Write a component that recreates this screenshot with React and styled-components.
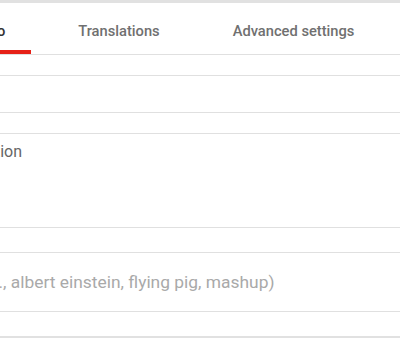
import React, { useState } from "react";
import styled, { createGlobalStyle } from "styled-components";

const GlobalStyle = createGlobalStyle`
  body {
    margin: 0;
    background: #fff;
    overflow: hidden;
    font-family: Roboto, "Liberation Sans", Arial, sans-serif;
  }
`;

const tabs = ["Basic info", "Translations", "Advanced settings"];

function App() {
  const [active, setActive] = useState("Basic info");

  return (
    <>
      <GlobalStyle />
      <Card>
        <TabBar>
          {tabs.map((tab) => (
            <Tab
              key={tab}
              $active={active === tab}
              onClick={() => setActive(tab)}
            >
              {tab}
            </Tab>
          ))}
        </TabBar>
        <Form>
          <Input type="text" placeholder="Title" />
          <TextArea placeholder="Description" />
          <Input
            $tall
            type="text"
            placeholder="Tags (e.g., albert einstein, flying pig, mashup)"
          />
        </Form>
      </Card>
    </>
  );
}

const Card = styled.div`
  height: 338px;
  box-sizing: border-box;
  border-top: 3px solid #e1e1e1;
  border-bottom: 2px solid #e1e1e1;
  display: flex;
  flex-direction: column;
`;

const TabBar = styled.div`
  display: flex;
  gap: 21px;
  height: 52px;
  box-sizing: border-box;
  border-bottom: 1px solid #e0e0e0;
  margin-left: -86px;
  width: 620px;
`;

const Tab = styled.button`
  background: none;
  border: none;
  padding: 9px 26px 0;
  height: 51px;
  font-family: Roboto, "Liberation Sans", Arial, sans-serif;
  font-size: 14.7px;
  font-weight: 500;
  color: ${(p) => (p.$active ? "#333" : "#707070")};
  border-bottom: 4px solid ${(p) => (p.$active ? "#e62117" : "transparent")};
  box-sizing: border-box;
  white-space: nowrap;
  cursor: pointer;
`;

const Form = styled.div`
  display: flex;
  flex-direction: column;
  margin-left: -70px;
  width: 560px;
  padding-top: 20px;
`;

const fieldStyle = `
  box-sizing: border-box;
  width: 100%;
  border: 1px solid #e0e0e0;
  font-family: Roboto, "Liberation Sans", Arial, sans-serif;
  color: #333;
  background: #fff;
  outline: none;
`;

const Input = styled.input`
  ${fieldStyle}
  height: ${(p) => (p.$tall ? "60px" : "38px")};
  margin-top: ${(p) => (p.$tall ? "24px" : "0")};
  padding: ${(p) => (p.$tall ? "0" : "0 10px")};
  text-indent: ${(p) => (p.$tall ? "-4px" : "0")};
  font-size: ${(p) => (p.$tall ? "17.4px" : "16px")};
  &::placeholder {
    color: #a9a9a9;
  }
`;

const TextArea = styled.textarea`
  ${fieldStyle}
  margin-top: 20px;
  height: 95px;
  padding: 8px 10px 0;
  font-size: 16px;
  line-height: 20px;
  resize: none;
  &::placeholder {
    color: #666;
  }
`;

export default App;
